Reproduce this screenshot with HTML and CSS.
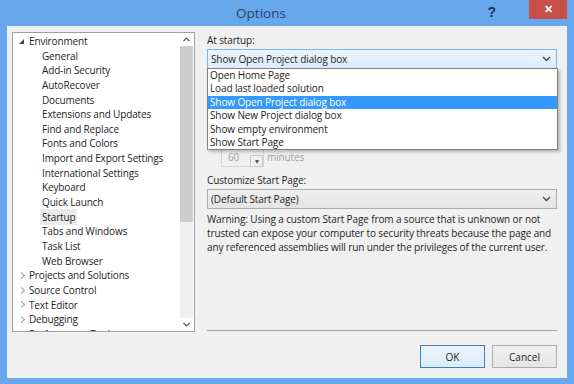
FILE: index.html
```html
<!DOCTYPE html>
<html lang="en">
<head>
    <meta charset="UTF-8">
    <title>Options</title>
    <link rel="stylesheet" href="styles.css">
</head>
<body>
    <div class="window">
        <div class="titlebar">
            <div></div>
            <div class="title">Options</div>
            <div class="controls">
                <span class="help">?</span>
                <span class="close">&#x2715;</span>
            </div>
        </div>

        <div class="client">
            <div class="main">
                <!-- category tree -->
                <div class="tree">
                    <div class="tree-items">
                        <div class="node"><span class="exp open"></span>Environment</div>
                        <div class="leaf">General</div>
                        <div class="leaf">Add-in Security</div>
                        <div class="leaf">AutoRecover</div>
                        <div class="leaf">Documents</div>
                        <div class="leaf">Extensions and Updates</div>
                        <div class="leaf">Find and Replace</div>
                        <div class="leaf">Fonts and Colors</div>
                        <div class="leaf">Import and Export Settings</div>
                        <div class="leaf">International Settings</div>
                        <div class="leaf">Keyboard</div>
                        <div class="leaf">Quick Launch</div>
                        <div class="leaf"><span class="current">Startup</span></div>
                        <div class="leaf">Tabs and Windows</div>
                        <div class="leaf">Task List</div>
                        <div class="leaf">Web Browser</div>
                        <div class="node"><span class="exp"></span>Projects and Solutions</div>
                        <div class="node"><span class="exp"></span>Source Control</div>
                        <div class="node"><span class="exp"></span>Text Editor</div>
                        <div class="node"><span class="exp"></span>Debugging</div>
                        <div class="node"><span class="exp"></span>Performance Tools</div>
                    </div>
                    <div class="scrollbar">
                        <svg class="arrow" width="13" height="13" viewBox="0 0 13 13"><path d="M3.5 8 L6.5 5 L9.5 8" fill="none" stroke="#555" stroke-width="1.2"/></svg>
                        <div class="track"><div class="thumb"></div></div>
                        <svg class="arrow" width="13" height="13" viewBox="0 0 13 13"><path d="M3.5 5 L6.5 8 L9.5 5" fill="none" stroke="#555" stroke-width="1.2"/></svg>
                    </div>
                </div>

                <!-- startup page -->
                <div class="panel">
                    <div class="label">At startup:</div>
                    <div class="combo-wrap">
                        <div class="combo focused">
                            <span>Show Open Project dialog box</span>
                            <svg width="9" height="6" viewBox="0 0 9 6"><path d="M1 1 L4.5 4.5 L8 1" fill="none" stroke="#444" stroke-width="1.3"/></svg>
                        </div>
                        <div class="droplist">
                            <div class="opt">Open Home Page</div>
                            <div class="opt">Load last loaded solution</div>
                            <div class="opt selected">Show Open Project dialog box</div>
                            <div class="opt">Show New Project dialog box</div>
                            <div class="opt">Show empty environment</div>
                            <div class="opt">Show Start Page</div>
                        </div>
                    </div>

                    <div class="download">
                        <div class="spin-row">
                            <div class="spin"><span>60</span><span class="spin-btn">&#x25BE;</span></div>
                            <span>minutes</span>
                        </div>
                    </div>

                    <div class="label">Customize Start Page:</div>
                    <div class="combo">
                        <span>(Default Start Page)</span>
                        <svg width="9" height="6" viewBox="0 0 9 6"><path d="M1 1 L4.5 4.5 L8 1" fill="none" stroke="#444" stroke-width="1.3"/></svg>
                    </div>
                    <p class="warning">Warning: Using a custom Start Page from a source that is unknown or not trusted can expose your computer to security threats because the page and any referenced assemblies will run under the privileges of the current user.</p>

                    <div class="separator"></div>
                </div>
            </div>

            <div class="footer">
                <button class="default">OK</button>
                <button>Cancel</button>
            </div>
        </div>
    </div>
</body>
</html>
```

FILE: styles.css
```css
body {
    margin: 0;
    font-family: "Open Sans", "Noto Sans", sans-serif;
    font-size: 10px;
    letter-spacing: -0.12px;
    color: #1e1e1e;
}

.window {
    width: 574px;
    height: 384px;
    background-color: #67a7ec;
    display: flex;
    flex-direction: column;
}

.titlebar {
    height: 26px;
    display: grid;
    grid-template-columns: 1fr auto 1fr;
    align-items: start;
}

.title {
    font-size: 13.5px;
    letter-spacing: 0;
    color: #2c4266;
    line-height: 26px;
    margin-right: 52px;
}

.controls {
    display: flex;
    justify-content: flex-end;
    align-items: flex-start;
    padding-right: 7px;
}

.help {
    font-family: "Liberation Sans", sans-serif;
    font-weight: bold;
    font-size: 14px;
    color: #1d3558;
    margin: 4px 33px 0 0;
}

.close {
    width: 38px;
    height: 19px;
    background-color: #c8504a;
    color: #fff;
    font-size: 11px;
    font-weight: bold;
    text-align: center;
    line-height: 18px;
}

.client {
    flex: 1;
    margin: 0 7px 6px 7px;
    background-color: #f0f0f0;
    padding: 6px 10px 0 5px;
}

.main {
    display: flex;
    gap: 12px;
    height: 300px;
}

.tree {
    width: 181px;
    height: 298px;
    border: 1px solid #a0a0a0;
    background-color: #fff;
    display: flex;
    overflow: hidden;
}

.tree-items {
    flex: 1;
    padding-top: 1px;
    white-space: nowrap;
    overflow: hidden;
    font-size: 10px;
    letter-spacing: -0.15px;
}

.tree-items div {
    height: 14.65px;
    line-height: 14.65px;
}

.node {
    display: flex;
    align-items: center;
}

.leaf {
    padding-left: 29px;
}

.current {
    background-color: #eaeaea;
    padding: 1px 2px;
    margin-left: -2px;
}

.exp {
    width: 16px;
    height: 11px;
    position: relative;
}

.exp::before {
    content: "";
    position: absolute;
    left: 6px;
    top: 3px;
    width: 4px;
    height: 4px;
    border-right: 1px solid #9a9a9a;
    border-bottom: 1px solid #9a9a9a;
    transform: rotate(-45deg);
}

.exp.open::before {
    left: 6px;
    top: 3px;
    width: 0;
    height: 0;
    border: none;
    border-left: 5px solid transparent;
    border-bottom: 5px solid #444;
    transform: none;
}

.scrollbar {
    width: 13px;
    display: flex;
    flex-direction: column;
    background-color: #fff;
    margin-right: 1px;
}

.arrow {
    flex: none;
}

.track {
    flex: 1;
    background-color: #f0f0f0;
}

.thumb {
    height: 176px;
    background-color: #cdcdcd;
}

.panel {
    flex: 1;
    display: flex;
    flex-direction: column;
}

.label {
    line-height: 14px;
    margin: 1px 0 2px 0;
}

.combo-wrap {
    position: relative;
}

.combo {
    height: 18px;
    border: 1px solid #acacac;
    background: linear-gradient(#efefef, #e4e4e4);
    display: flex;
    align-items: center;
    justify-content: space-between;
    padding: 0 5px 0 3px;
}

.combo.focused {
    border-color: #7eb4ea;
    background: linear-gradient(#ecf4fc, #dcecfc);
}

.droplist {
    position: absolute;
    left: 0;
    right: -1px;
    top: 19px;
    background-color: #fff;
    border: 1px solid #828282;
    box-shadow: 2px 2px 3px rgba(0, 0, 0, 0.25);
    z-index: 2;
}

.opt {
    height: 13.4px;
    line-height: 13.4px;
    padding-left: 2px;
}

.opt.selected {
    background-color: #3399ff;
    color: #fff;
}

.download {
    height: 103px;
    color: #a0a0a0;
    padding-top: 78px;
    box-sizing: border-box;
}

.spin-row {
    display: flex;
    align-items: center;
    gap: 3px;
    margin-left: 14px;
}

.spin {
    width: 43px;
    height: 20px;
    border: 1px solid #d5d5d5;
    display: flex;
    justify-content: space-between;
    align-items: center;
    padding-left: 6px;
    box-sizing: border-box;
}

.spin-btn {
    width: 11px;
    height: 10px;
    margin-top: 8px;
    border: 1px solid #c8c8c8;
    color: #555;
    font-size: 8px;
    line-height: 10px;
    text-align: center;
}

.warning {
    margin: 3px 0 0 0;
    line-height: 14px;
}

.separator {
    margin-top: auto;
    height: 1px;
    background-color: #a0a0a0;
    margin-bottom: 1px;
}

.footer {
    display: flex;
    justify-content: flex-end;
    gap: 7px;
    margin-top: 13px;
}

button {
    width: 65px;
    height: 23px;
    font-family: inherit;
    font-size: 10px;
    color: #1e1e1e;
    border: 1px solid #acacac;
    background: linear-gradient(#f0f0f0, #e5e5e5);
    padding: 0;
}

button.default {
    border-color: #3c7fb1;
    background: linear-gradient(#ecf4fc, #dcecfc);
}
```
